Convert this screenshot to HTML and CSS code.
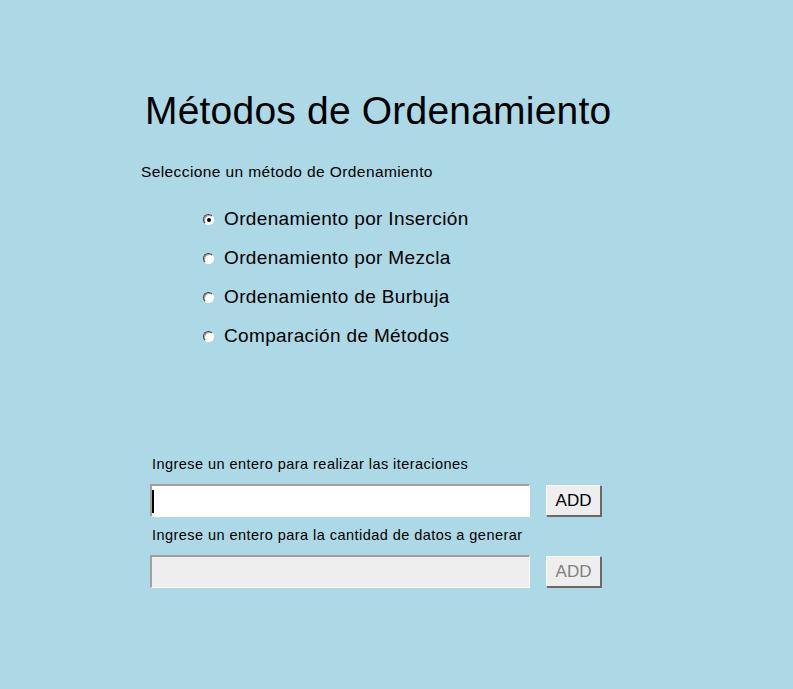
FILE: index.html
```html
<!DOCTYPE html>
<html lang="es">
<head>
<meta charset="utf-8">
<title>Métodos de Ordenamiento</title>
<link rel="stylesheet" href="styles.css">
</head>
<body>
<main class="page">
  <h1 class="title">Métodos de Ordenamiento</h1>
  <p class="subtitle">Seleccione un método de Ordenamiento</p>
  <div class="options">
    <label class="option"><input class="radio" type="radio" name="m" checked><span>Ordenamiento por Inserción</span></label>
    <label class="option"><input class="radio" type="radio" name="m"><span>Ordenamiento por Mezcla</span></label>
    <label class="option"><input class="radio" type="radio" name="m"><span>Ordenamiento de Burbuja</span></label>
    <label class="option"><input class="radio" type="radio" name="m"><span>Comparación de Métodos</span></label>
  </div>
  <section class="form">
    <p class="field-label">Ingrese un entero para realizar las iteraciones</p>
    <div class="field-row">
      <div class="field"><span class="caret"></span></div>
      <button class="btn" type="button">ADD</button>
    </div>
    <p class="field-label second">Ingrese un entero para la cantidad de datos a generar</p>
    <div class="field-row">
      <div class="field disabled"></div>
      <button class="btn disabled" type="button">ADD</button>
    </div>
  </section>
</main>
</body>
</html>
```
FILE: styles.css
```css
html, body {
  margin: 0;
  padding: 0;
  background: #add8e6;
  height: 100%;
}
body {
  font-family: "Liberation Sans", Arial, sans-serif;
  color: #000;
}
.page {
  padding: 87px 0 0 141px;
}
.title {
  margin: 0 0 0 4px;
  font-size: 39px;
  letter-spacing: 0.2px;
  font-weight: normal;
  line-height: 48px;
}
.subtitle {
  margin: 28px 0 0 0;
  font-size: 15.5px;
  letter-spacing: 0.4px;
  line-height: 18px;
}
.options {
  margin: 27px 0 0 62px;
  display: flex;
  flex-direction: column;
  gap: 17px;
}
.option {
  display: flex;
  align-items: center;
  gap: 10px;
  font-size: 19px;
  letter-spacing: 0.35px;
  line-height: 22px;
  height: 22px;
}
.radio {
  appearance: none;
  -webkit-appearance: none;
  margin: 0;
  width: 11px;
  height: 11px;
  border-radius: 50%;
  background: #fff;
  border: 1px solid;
  border-color: #404040 #ffffff #ffffff #404040;
  box-shadow: inset 1px 1px 0 #a0a0a0;
  box-sizing: border-box;
  position: relative;
}
.radio:checked::after {
  content: "";
  position: absolute;
  left: 3px;
  top: 3px;
  width: 4px;
  height: 4px;
  border-radius: 50%;
  background: #000;
}
.form {
  margin: 108px 0 0 9px;
}
.field-label {
  margin: 0 0 0 2px;
  font-size: 14.5px;
  letter-spacing: 0.45px;
  line-height: 18px;
}
.field-label.second {
  margin-top: 9px;
}
.field-row {
  display: flex;
  align-items: flex-start;
  gap: 16px;
  margin-top: 11px;
}
.field {
  width: 380px;
  height: 33px;
  box-sizing: border-box;
  background: #fff;
  border-top: 2px solid #a0a0a0;
  border-left: 2px solid #a0a0a0;
  border-bottom: 1px solid #ffffff;
  border-right: 1px solid #ffffff;
  display: flex;
  align-items: center;
}
.field.disabled {
  background: #eeeeee;
}
.caret {
  display: block;
  width: 2px;
  height: 23px;
  background: #000;
}
.btn {
  width: 55px;
  height: 31px;
  margin-top: 1px;
  box-sizing: border-box;
  background: #eeeeee;
  border: 1px solid;
  border-color: #ffffff #696969 #696969 #ffffff;
  box-shadow: 1px 1px 0 #696969;
  font-family: "Liberation Sans", Arial, sans-serif;
  font-size: 17px;
  color: #000;
  padding: 0;
}
.btn.disabled {
  color: #808080;
}
```
